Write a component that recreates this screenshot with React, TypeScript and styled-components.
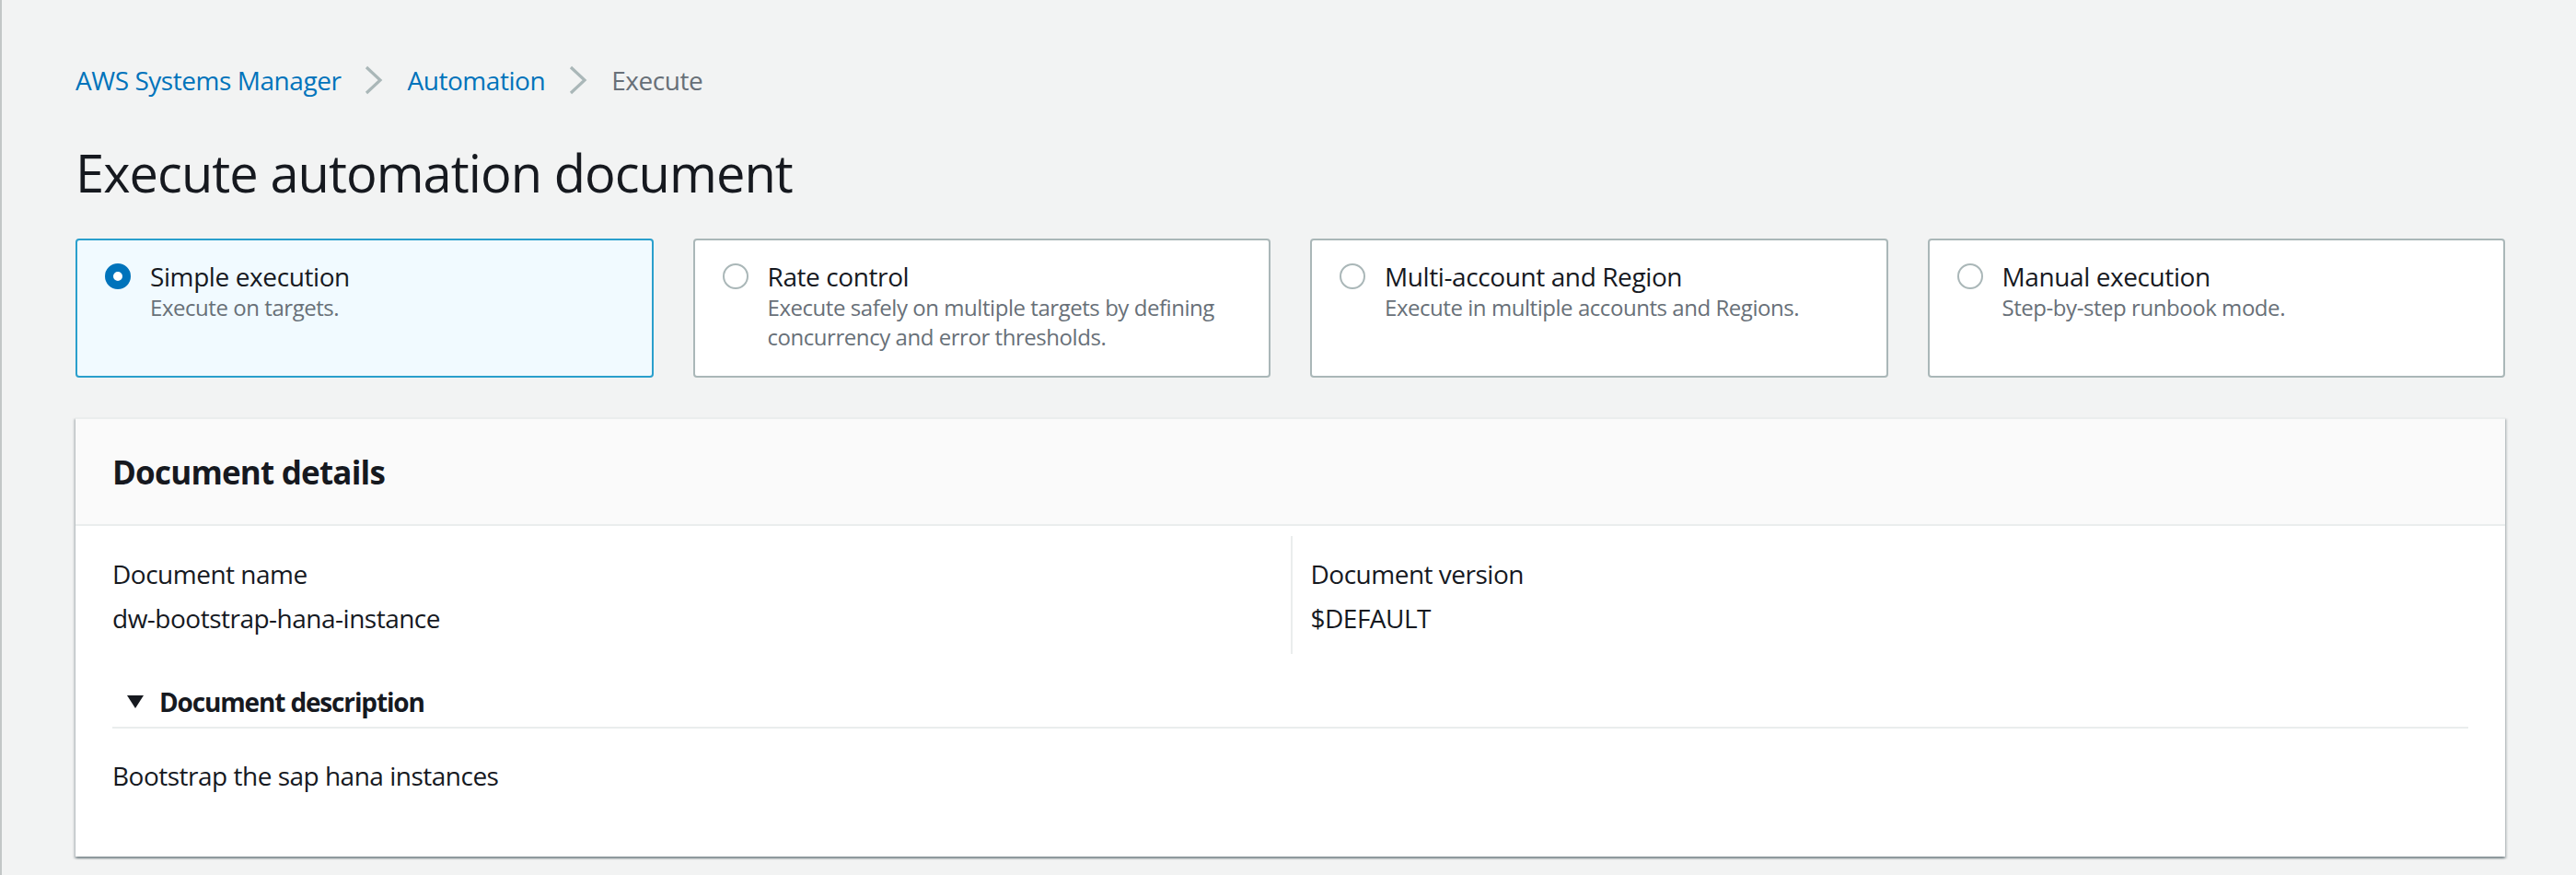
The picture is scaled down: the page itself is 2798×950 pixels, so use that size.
import React from "react";
import styled, { createGlobalStyle } from "styled-components";

const GlobalStyle = createGlobalStyle`
  html, body { margin: 0; padding: 0; }
  body {
    font-family: "Open Sans", "Noto Sans", Arial, sans-serif;
    color: #16191f;
    background: #f2f3f3;
  }
  * { box-sizing: border-box; }
`;

const Page = styled.div`
  min-height: 950px;
  background: #f2f3f3;
  border-left: 2px solid #c3c7c7;
  padding: 65px 77px 0 80px;
`;

const Breadcrumbs = styled.nav`
  display: flex;
  align-items: center;
  gap: 26px;
  font-size: 28px;
  line-height: 44px;
  letter-spacing: -0.45px;
`;

const Crumb = styled.span<{ $current?: boolean }>`
  color: ${(p) => (p.$current ? "#687078" : "#0073bb")};
`;

const Chevron = () => (
  <svg width="20" height="32" viewBox="0 0 20 32" fill="none">
    <path d="M2 2 L17 16 L2 30" stroke="#aab7b8" strokeWidth="3.2" />
  </svg>
);

const Title = styled.h1`
  margin: 42px 0 36px;
  font-size: 56px;
  line-height: 72px;
  font-weight: 400;
  letter-spacing: -0.95px;
`;

const Tiles = styled.div`
  display: grid;
  grid-template-columns: repeat(4, 1fr);
  gap: 43px;
`;

const Tile = styled.div<{ $selected?: boolean }>`
  display: flex;
  align-items: flex-start;
  gap: 21px;
  padding: 21px 30px 26px 30px;
  border: 2px solid ${(p) => (p.$selected ? "#2a9fcc" : "#aab7b8")};
  border-radius: 4px;
  background: ${(p) => (p.$selected ? "#f1faff" : "#ffffff")};
`;

const Radio = styled.span<{ $checked?: boolean }>`
  flex: none;
  width: 28px;
  height: 28px;
  margin-top: 4px;
  border-radius: 50%;
  background: #ffffff;
  border: ${(p) => (p.$checked ? "9px solid #0073bb" : "2.5px solid #aab7b8")};
`;

const TileText = styled.div`
  display: flex;
  flex-direction: column;
`;

const TileTitle = styled.span`
  font-size: 28px;
  line-height: 36px;
  letter-spacing: -0.4px;
  color: #16191f;
`;

const TileDesc = styled.span`
  font-size: 24px;
  line-height: 32px;
  letter-spacing: -0.45px;
  color: #687078;
`;

const Container = styled.section`
  margin-top: 43px;
  background: #ffffff;
  box-shadow: 0 2px 2px 0 rgba(0, 28, 36, 0.3), 2px 2px 2px 0 rgba(0, 28, 36, 0.15),
    -2px 2px 2px 0 rgba(0, 28, 36, 0.15);
  border-top: 2px solid #eaeded;
`;

const Header = styled.header`
  background: #fafafa;
  border-bottom: 2px solid #eaeded;
  padding: 35px 40px 33px;
`;

const HeaderTitle = styled.h2`
  margin: 0;
  font-size: 35px;
  line-height: 46px;
  font-weight: 700;
  letter-spacing: -0.8px;
`;

const Body = styled.div`
  padding: 11px 40px 66px;
`;

const Columns = styled.div`
  display: grid;
  grid-template-columns: 1fr 1fr;
`;

const Column = styled.div<{ $divider?: boolean }>`
  padding: 19px 0 17px ${(p) => (p.$divider ? "20px" : "0")};
  border-left: ${(p) => (p.$divider ? "2px solid #eaeded" : "none")};
  display: flex;
  flex-direction: column;
  gap: 4px;
`;

const Label = styled.div`
  font-size: 28px;
  line-height: 44px;
  letter-spacing: -0.5px;
`;

const Value = styled.div`
  font-size: 28px;
  line-height: 44px;
  letter-spacing: -0.5px;
`;

const ExpandHeader = styled.div`
  margin-top: 30px;
  display: flex;
  align-items: center;
  gap: 16px;
  padding: 0 0 5px 15px;
  border-bottom: 2px solid #eaeded;
  font-size: 28px;
  line-height: 44px;
  font-weight: 700;
  letter-spacing: -1.15px;
`;

const Triangle = () => (
  <svg width="20" height="18" viewBox="0 0 20 18">
    <path d="M1 2 L19 2 L10 16 Z" fill="#16191f" />
  </svg>
);

const Description = styled.p`
  margin: 29px 0 0;
  font-size: 28px;
  line-height: 44px;
  letter-spacing: -0.5px;
`;

const tiles = [
  { title: "Simple execution", desc: "Execute on targets.", selected: true },
  {
    title: "Rate control",
    desc: "Execute safely on multiple targets by defining concurrency and error thresholds.",
  },
  { title: "Multi-account and Region", desc: "Execute in multiple accounts and Regions." },
  { title: "Manual execution", desc: "Step-by-step runbook mode." },
];

export default function App() {
  return (
    <>
      <GlobalStyle />
      <Page>
        <Breadcrumbs>
          <Crumb>AWS Systems Manager</Crumb>
          <Chevron />
          <Crumb>Automation</Crumb>
          <Chevron />
          <Crumb $current>Execute</Crumb>
        </Breadcrumbs>
        <Title>Execute automation document</Title>
        <Tiles>
          {tiles.map((t) => (
            <Tile key={t.title} $selected={t.selected}>
              <Radio $checked={t.selected} />
              <TileText>
                <TileTitle>{t.title}</TileTitle>
                <TileDesc>{t.desc}</TileDesc>
              </TileText>
            </Tile>
          ))}
        </Tiles>
        <Container>
          <Header>
            <HeaderTitle>Document details</HeaderTitle>
          </Header>
          <Body>
            <Columns>
              <Column>
                <Label>Document name</Label>
                <Value>dw-bootstrap-hana-instance</Value>
              </Column>
              <Column $divider>
                <Label>Document version</Label>
                <Value>$DEFAULT</Value>
              </Column>
            </Columns>
            <ExpandHeader>
              <Triangle />
              Document description
            </ExpandHeader>
            <Description>Bootstrap the sap hana instances</Description>
          </Body>
        </Container>
      </Page>
    </>
  );
}
